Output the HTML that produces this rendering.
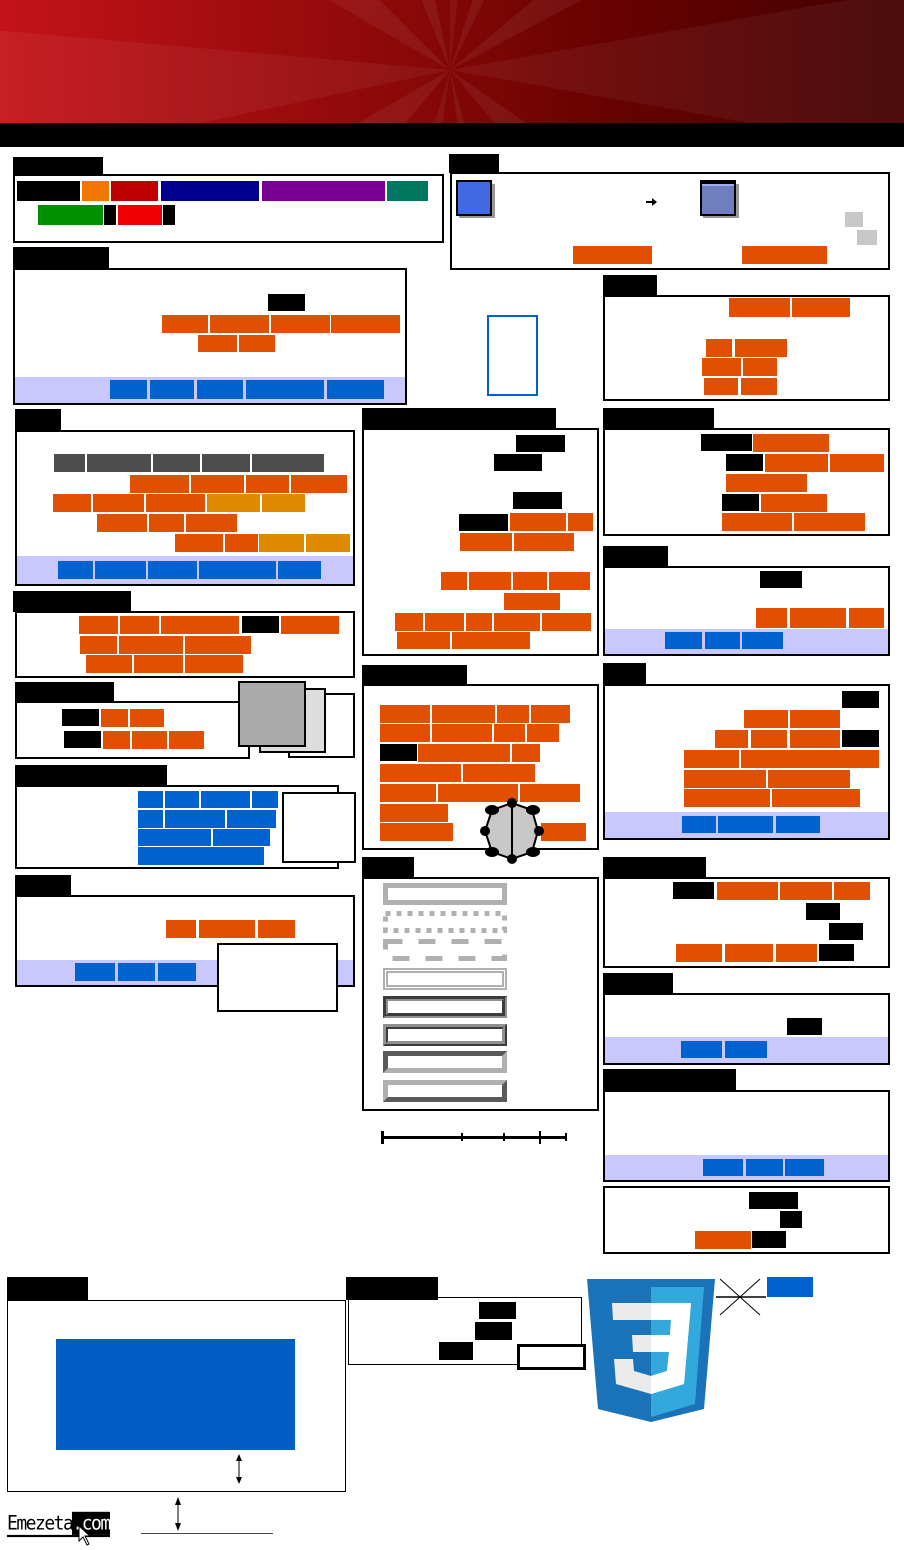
<!DOCTYPE html><html><head><meta charset="utf-8"><style>
*{margin:0;padding:0;box-sizing:border-box}
body{width:904px;height:1550px;position:relative;background:#fff;overflow:hidden;font-family:"Liberation Sans",sans-serif}
i{position:absolute;display:block}
.o{background:#e05000}.b{background:#0062d0}.k{background:#000}.l{background:#c8c8ff}.g{background:#4d4d4d}.y{background:#e08a00}
.bx{border:2px solid #000;background:#fff}
.hd{position:absolute;left:0;top:0;width:904px;height:123px;background:linear-gradient(90deg,#c41318,#8a0808 45%,#6a0202 65%,#420000)}
.rays{position:absolute;left:0;top:0;width:904px;height:123px;background:conic-gradient(from 0deg at 450px 70px,rgba(255,255,255,.05) 0 6deg,transparent 6deg 18deg,rgba(255,255,255,.06) 18deg 26deg,transparent 26deg 50deg,rgba(255,255,255,.06) 50deg 62deg,transparent 62deg 80deg,rgba(255,255,255,.05) 80deg 100deg,transparent 100deg 125deg,rgba(255,255,255,.06) 125deg 140deg,transparent 140deg 165deg,rgba(255,255,255,.06) 165deg 172deg,transparent 172deg 188deg,rgba(255,255,255,.05) 188deg 196deg,transparent 196deg 220deg,rgba(255,255,255,.06) 220deg 240deg,transparent 240deg 258deg,rgba(255,255,255,.05) 258deg 275deg,transparent 275deg 300deg,rgba(255,255,255,.06) 300deg 315deg,transparent 315deg 338deg,rgba(255,255,255,.06) 338deg 348deg,transparent 348deg 360deg)}
.bs{position:absolute;left:383px;width:124px;height:22px}
</style></head><body>
<div class="hd"></div><div class="rays"></div>
<i class="k" style="left:0;top:123px;width:904px;height:24px"></i>

<!-- s1 -->
<i class="k" style="left:13px;top:157px;width:90px;height:18px"></i>
<i class="bx" style="left:13px;top:174px;width:431px;height:69px"></i>
<i class="k" style="left:17px;top:181px;width:63px;height:20px"></i>
<i style="left:82px;top:181px;width:27px;height:20px;background:#f07800"></i>
<i style="left:111px;top:181px;width:47px;height:20px;background:#c00000"></i>
<i style="left:161px;top:181px;width:98px;height:20px;background:#000090"></i>
<i style="left:262px;top:181px;width:123px;height:20px;background:#780090"></i>
<i style="left:387px;top:181px;width:41px;height:20px;background:#007860"></i>
<i style="left:38px;top:205px;width:65px;height:20px;background:#009000"></i>
<i class="k" style="left:104px;top:205px;width:12px;height:20px"></i>
<i style="left:118px;top:205px;width:44px;height:20px;background:#f00000"></i>
<i class="k" style="left:163px;top:205px;width:12px;height:20px"></i>

<!-- s2 -->
<i class="k" style="left:449px;top:154px;width:50px;height:19px"></i>
<i class="bx" style="left:450px;top:172px;width:440px;height:98px"></i>
<i style="left:459px;top:184px;width:36px;height:34px;background:#999"></i>
<i style="left:456px;top:180px;width:36px;height:36px;background:#4169e1;border:2px solid #000"></i>
<i style="left:703px;top:184px;width:36px;height:34px;background:#999"></i>
<i style="left:700px;top:180px;width:36px;height:36px;background:#6f7fbd;border:2px solid #000;border-top:4px solid #000;box-shadow:inset 0 2px 0 #9fb0f0"></i>
<svg style="position:absolute;left:646px;top:198px" width="12" height="9"><polygon points="0,3 6,3 6,0 11,4 6,8 6,5 0,5" fill="#000"/></svg>
<i style="left:845px;top:212px;width:18px;height:15px;background:#c8c8c8"></i>
<i style="left:857px;top:230px;width:20px;height:15px;background:#c8c8c8"></i>
<i class="o" style="left:573px;top:246px;width:79px;height:18px"></i>
<i class="o" style="left:742px;top:246px;width:85px;height:18px"></i>

<!-- s3 -->
<i class="k" style="left:13px;top:247px;width:96px;height:22px"></i>
<i class="bx" style="left:13px;top:268px;width:394px;height:137px"></i>
<i class="k" style="left:268px;top:294px;width:37px;height:17px"></i>
<i class="o" style="left:162px;top:315px;width:46px;height:18px"></i>
<i class="o" style="left:210px;top:315px;width:59px;height:18px"></i>
<i class="o" style="left:271px;top:315px;width:59px;height:18px"></i>
<i class="o" style="left:331px;top:315px;width:69px;height:18px"></i>
<i class="o" style="left:198px;top:335px;width:39px;height:17px"></i>
<i class="o" style="left:239px;top:335px;width:36px;height:17px"></i>
<i class="l" style="left:15px;top:377px;width:390px;height:26px"></i>
<i class="b" style="left:110px;top:380px;width:37px;height:19px"></i>
<i class="b" style="left:150px;top:380px;width:44px;height:19px"></i>
<i class="b" style="left:197px;top:380px;width:46px;height:19px"></i>
<i class="b" style="left:246px;top:380px;width:78px;height:19px"></i>
<i class="b" style="left:327px;top:380px;width:57px;height:19px"></i>
<i style="left:487px;top:315px;width:51px;height:81px;border:2px solid #0062d0"></i>

<!-- s4 -->
<i class="k" style="left:603px;top:275px;width:54px;height:21px"></i>
<i class="bx" style="left:603px;top:295px;width:287px;height:106px"></i>
<i class="o" style="left:729px;top:298px;width:61px;height:19px"></i>
<i class="o" style="left:792px;top:298px;width:58px;height:19px"></i>
<i class="o" style="left:706px;top:339px;width:26px;height:18px"></i>
<i class="o" style="left:735px;top:339px;width:52px;height:18px"></i>
<i class="o" style="left:702px;top:358px;width:39px;height:18px"></i>
<i class="o" style="left:743px;top:358px;width:34px;height:18px"></i>
<i class="o" style="left:704px;top:378px;width:34px;height:17px"></i>
<i class="o" style="left:741px;top:378px;width:36px;height:17px"></i>

<!-- s5 -->
<i class="k" style="left:15px;top:409px;width:46px;height:22px"></i>
<i class="bx" style="left:15px;top:430px;width:340px;height:156px"></i>
<i class="g" style="left:54px;top:454px;width:31px;height:18px"></i>
<i class="g" style="left:87px;top:454px;width:64px;height:18px"></i>
<i class="g" style="left:153px;top:454px;width:47px;height:18px"></i>
<i class="g" style="left:202px;top:454px;width:48px;height:18px"></i>
<i class="g" style="left:252px;top:454px;width:72px;height:18px"></i>
<i class="o" style="left:130px;top:475px;width:59px;height:18px"></i>
<i class="o" style="left:191px;top:475px;width:53px;height:18px"></i>
<i class="o" style="left:246px;top:475px;width:43px;height:18px"></i>
<i class="o" style="left:291px;top:475px;width:56px;height:18px"></i>
<i class="o" style="left:53px;top:494px;width:38px;height:18px"></i>
<i class="o" style="left:93px;top:494px;width:51px;height:18px"></i>
<i class="o" style="left:146px;top:494px;width:59px;height:18px"></i>
<i class="y" style="left:207px;top:494px;width:53px;height:18px"></i>
<i class="y" style="left:262px;top:494px;width:43px;height:18px"></i>
<i class="o" style="left:97px;top:514px;width:50px;height:18px"></i>
<i class="o" style="left:149px;top:514px;width:35px;height:18px"></i>
<i class="o" style="left:186px;top:514px;width:51px;height:18px"></i>
<i class="o" style="left:175px;top:534px;width:48px;height:18px"></i>
<i class="o" style="left:225px;top:534px;width:33px;height:18px"></i>
<i class="y" style="left:259px;top:534px;width:45px;height:18px"></i>
<i class="y" style="left:306px;top:534px;width:44px;height:18px"></i>
<i class="l" style="left:17px;top:556px;width:336px;height:28px"></i>
<i class="b" style="left:58px;top:561px;width:35px;height:18px"></i>
<i class="b" style="left:95px;top:561px;width:51px;height:18px"></i>
<i class="b" style="left:148px;top:561px;width:49px;height:18px"></i>
<i class="b" style="left:199px;top:561px;width:77px;height:18px"></i>
<i class="b" style="left:278px;top:561px;width:43px;height:18px"></i>

<!-- s6 -->
<i class="k" style="left:362px;top:408px;width:194px;height:22px"></i>
<i class="bx" style="left:362px;top:428px;width:237px;height:228px"></i>
<i class="k" style="left:516px;top:435px;width:49px;height:17px"></i>
<i class="k" style="left:494px;top:454px;width:48px;height:17px"></i>
<i class="k" style="left:513px;top:492px;width:49px;height:17px"></i>
<i class="k" style="left:459px;top:514px;width:49px;height:17px"></i>
<i class="o" style="left:510px;top:513px;width:56px;height:18px"></i>
<i class="o" style="left:568px;top:513px;width:25px;height:18px"></i>
<i class="o" style="left:460px;top:533px;width:52px;height:18px"></i>
<i class="o" style="left:514px;top:533px;width:60px;height:18px"></i>
<i class="o" style="left:441px;top:572px;width:26px;height:18px"></i>
<i class="o" style="left:469px;top:572px;width:42px;height:18px"></i>
<i class="o" style="left:513px;top:572px;width:34px;height:18px"></i>
<i class="o" style="left:549px;top:572px;width:41px;height:18px"></i>
<i class="o" style="left:504px;top:593px;width:56px;height:17px"></i>
<i class="o" style="left:395px;top:613px;width:28px;height:18px"></i>
<i class="o" style="left:425px;top:613px;width:39px;height:18px"></i>
<i class="o" style="left:466px;top:613px;width:26px;height:18px"></i>
<i class="o" style="left:494px;top:613px;width:46px;height:18px"></i>
<i class="o" style="left:542px;top:613px;width:49px;height:18px"></i>
<i class="o" style="left:397px;top:632px;width:53px;height:17px"></i>
<i class="o" style="left:452px;top:632px;width:78px;height:17px"></i>

<!-- s7 -->
<i class="k" style="left:603px;top:408px;width:111px;height:21px"></i>
<i class="bx" style="left:603px;top:428px;width:287px;height:108px"></i>
<i class="k" style="left:701px;top:434px;width:51px;height:17px"></i>
<i class="o" style="left:753px;top:434px;width:76px;height:18px"></i>
<i class="k" style="left:726px;top:454px;width:37px;height:17px"></i>
<i class="o" style="left:765px;top:454px;width:63px;height:18px"></i>
<i class="o" style="left:830px;top:454px;width:54px;height:18px"></i>
<i class="o" style="left:726px;top:474px;width:81px;height:18px"></i>
<i class="k" style="left:722px;top:494px;width:37px;height:17px"></i>
<i class="o" style="left:761px;top:494px;width:66px;height:18px"></i>
<i class="o" style="left:722px;top:513px;width:70px;height:18px"></i>
<i class="o" style="left:794px;top:513px;width:71px;height:18px"></i>

<!-- s8 -->
<i class="k" style="left:603px;top:546px;width:65px;height:21px"></i>
<i class="bx" style="left:603px;top:566px;width:287px;height:90px"></i>
<i class="k" style="left:760px;top:571px;width:42px;height:17px"></i>
<i class="o" style="left:756px;top:608px;width:31px;height:20px"></i>
<i class="o" style="left:790px;top:608px;width:56px;height:20px"></i>
<i class="o" style="left:849px;top:608px;width:35px;height:20px"></i>
<i class="l" style="left:605px;top:629px;width:283px;height:25px"></i>
<i class="b" style="left:665px;top:632px;width:37px;height:17px"></i>
<i class="b" style="left:705px;top:632px;width:35px;height:17px"></i>
<i class="b" style="left:742px;top:632px;width:41px;height:17px"></i>

<!-- s9 -->
<i class="k" style="left:13px;top:591px;width:118px;height:21px"></i>
<i class="bx" style="left:15px;top:611px;width:340px;height:67px"></i>
<i class="o" style="left:79px;top:616px;width:39px;height:18px"></i>
<i class="o" style="left:120px;top:616px;width:39px;height:18px"></i>
<i class="o" style="left:161px;top:616px;width:78px;height:18px"></i>
<i class="k" style="left:242px;top:616px;width:37px;height:17px"></i>
<i class="o" style="left:281px;top:616px;width:58px;height:18px"></i>
<i class="o" style="left:80px;top:636px;width:37px;height:18px"></i>
<i class="o" style="left:119px;top:636px;width:64px;height:18px"></i>
<i class="o" style="left:185px;top:636px;width:66px;height:18px"></i>
<i class="o" style="left:86px;top:655px;width:46px;height:18px"></i>
<i class="o" style="left:134px;top:655px;width:49px;height:18px"></i>
<i class="o" style="left:185px;top:655px;width:58px;height:18px"></i>

<!-- s10 -->
<i class="k" style="left:15px;top:682px;width:99px;height:20px"></i>
<i class="bx" style="left:15px;top:701px;width:235px;height:58px"></i>
<i class="k" style="left:62px;top:709px;width:37px;height:17px"></i>
<i class="o" style="left:101px;top:709px;width:27px;height:18px"></i>
<i class="o" style="left:130px;top:709px;width:34px;height:18px"></i>
<i class="k" style="left:64px;top:731px;width:37px;height:17px"></i>
<i class="o" style="left:103px;top:731px;width:27px;height:18px"></i>
<i class="o" style="left:132px;top:731px;width:35px;height:18px"></i>
<i class="o" style="left:169px;top:731px;width:35px;height:18px"></i>
<i class="bx" style="left:288px;top:693px;width:67px;height:65px"></i>
<i style="left:259px;top:688px;width:67px;height:65px;background:#ddd;border:2px solid #000"></i>
<i style="left:238px;top:681px;width:68px;height:66px;background:#aaa;border:2px solid #000"></i>

<!-- s11 -->
<i class="k" style="left:15px;top:765px;width:152px;height:21px"></i>
<i class="bx" style="left:15px;top:785px;width:324px;height:84px"></i>
<i class="b" style="left:138px;top:791px;width:25px;height:17px"></i>
<i class="b" style="left:165px;top:791px;width:34px;height:17px"></i>
<i class="b" style="left:201px;top:791px;width:49px;height:17px"></i>
<i class="b" style="left:252px;top:791px;width:26px;height:17px"></i>
<i class="b" style="left:138px;top:810px;width:25px;height:18px"></i>
<i class="b" style="left:165px;top:810px;width:60px;height:18px"></i>
<i class="b" style="left:227px;top:810px;width:49px;height:18px"></i>
<i class="b" style="left:138px;top:829px;width:73px;height:17px"></i>
<i class="b" style="left:213px;top:829px;width:57px;height:17px"></i>
<i class="b" style="left:138px;top:847px;width:126px;height:18px"></i>
<i class="bx" style="left:282px;top:792px;width:74px;height:71px"></i>

<!-- s12 -->
<i class="k" style="left:15px;top:875px;width:56px;height:21px"></i>
<i class="bx" style="left:15px;top:895px;width:340px;height:92px"></i>
<i class="o" style="left:166px;top:920px;width:30px;height:18px"></i>
<i class="o" style="left:199px;top:920px;width:56px;height:18px"></i>
<i class="o" style="left:258px;top:920px;width:37px;height:18px"></i>
<i class="l" style="left:17px;top:960px;width:336px;height:25px"></i>
<i class="b" style="left:75px;top:963px;width:40px;height:18px"></i>
<i class="b" style="left:118px;top:963px;width:37px;height:18px"></i>
<i class="b" style="left:158px;top:963px;width:38px;height:18px"></i>
<i class="bx" style="left:217px;top:943px;width:121px;height:69px"></i>

<!-- s13 -->
<i class="k" style="left:362px;top:665px;width:105px;height:21px"></i>
<i class="bx" style="left:362px;top:684px;width:237px;height:166px"></i>
<i class="o" style="left:380px;top:705px;width:50px;height:18px"></i>
<i class="o" style="left:432px;top:705px;width:63px;height:18px"></i>
<i class="o" style="left:497px;top:705px;width:32px;height:18px"></i>
<i class="o" style="left:531px;top:705px;width:39px;height:18px"></i>
<i class="o" style="left:380px;top:724px;width:50px;height:18px"></i>
<i class="o" style="left:432px;top:724px;width:60px;height:18px"></i>
<i class="o" style="left:494px;top:724px;width:31px;height:18px"></i>
<i class="o" style="left:527px;top:724px;width:32px;height:18px"></i>
<i class="k" style="left:380px;top:744px;width:37px;height:17px"></i>
<i class="o" style="left:418px;top:744px;width:92px;height:18px"></i>
<i class="o" style="left:512px;top:744px;width:28px;height:18px"></i>
<i class="o" style="left:380px;top:764px;width:81px;height:18px"></i>
<i class="o" style="left:463px;top:764px;width:72px;height:18px"></i>
<i class="o" style="left:380px;top:784px;width:56px;height:18px"></i>
<i class="o" style="left:438px;top:784px;width:80px;height:18px"></i>
<i class="o" style="left:520px;top:784px;width:60px;height:18px"></i>
<i class="o" style="left:380px;top:804px;width:68px;height:18px"></i>
<i class="o" style="left:380px;top:823px;width:73px;height:18px"></i>
<i class="o" style="left:541px;top:823px;width:45px;height:18px"></i>
<svg style="position:absolute;left:478px;top:797px" width="68" height="68" viewBox="0 0 68 68">
<polygon points="34,6 54,13 60,34 54,55 34,62 14,55 7,34 14,13" fill="#c8c8c8" stroke="#000" stroke-width="2"/>
<line x1="34" y1="6" x2="34" y2="62" stroke="#000" stroke-width="2"/>
<g fill="#000"><circle cx="34" cy="6" r="5"/><ellipse cx="55" cy="13" rx="7" ry="5"/><circle cx="61" cy="34" r="5"/><ellipse cx="55" cy="55" rx="7" ry="5"/><circle cx="34" cy="62" r="5"/><ellipse cx="14" cy="55" rx="7" ry="5"/><circle cx="7" cy="34" r="5"/><ellipse cx="14" cy="13" rx="7" ry="5"/></g></svg>

<!-- s14 -->
<i class="k" style="left:603px;top:663px;width:43px;height:22px"></i>
<i class="bx" style="left:603px;top:684px;width:287px;height:156px"></i>
<i class="k" style="left:842px;top:691px;width:37px;height:17px"></i>
<i class="o" style="left:744px;top:710px;width:44px;height:18px"></i>
<i class="o" style="left:790px;top:710px;width:50px;height:18px"></i>
<i class="o" style="left:715px;top:730px;width:33px;height:18px"></i>
<i class="o" style="left:751px;top:730px;width:36px;height:18px"></i>
<i class="o" style="left:790px;top:730px;width:50px;height:18px"></i>
<i class="k" style="left:842px;top:730px;width:37px;height:17px"></i>
<i class="o" style="left:684px;top:750px;width:55px;height:18px"></i>
<i class="o" style="left:741px;top:750px;width:138px;height:18px"></i>
<i class="o" style="left:684px;top:770px;width:82px;height:18px"></i>
<i class="o" style="left:768px;top:770px;width:82px;height:18px"></i>
<i class="o" style="left:684px;top:789px;width:86px;height:18px"></i>
<i class="o" style="left:772px;top:789px;width:88px;height:18px"></i>
<i class="l" style="left:605px;top:812px;width:283px;height:26px"></i>
<i class="b" style="left:682px;top:816px;width:34px;height:17px"></i>
<i class="b" style="left:718px;top:816px;width:55px;height:17px"></i>
<i class="b" style="left:776px;top:816px;width:44px;height:17px"></i>

<!-- s15 -->
<i class="k" style="left:362px;top:857px;width:52px;height:21px"></i>
<i class="bx" style="left:362px;top:877px;width:237px;height:234px"></i>
<i class="bs" style="top:883px;border:5px solid #b0b0b0"></i>
<svg style="position:absolute;left:383px;top:911px" width="124" height="22"><rect x="2.5" y="2.5" width="119" height="17" fill="none" stroke="#b0b0b0" stroke-width="5" stroke-dasharray="5 6"/></svg>
<svg style="position:absolute;left:383px;top:939px" width="124" height="22"><rect x="2.5" y="2.5" width="119" height="17" fill="none" stroke="#b0b0b0" stroke-width="5" stroke-dasharray="17 16"/></svg>
<i class="bs" style="top:968px;border:5px double #b0b0b0"></i>
<i class="bs" style="top:996px;border:5px groove #909090"></i>
<i class="bs" style="top:1024px;border:5px ridge #909090"></i>
<i class="bs" style="top:1051px;border:5px solid;border-color:#5a5a5a #b0b0b0 #b0b0b0 #5a5a5a"></i>
<i class="bs" style="top:1080px;border:5px solid;border-color:#b0b0b0 #5a5a5a #5a5a5a #b0b0b0"></i>
<i class="k" style="left:381px;top:1136px;width:186px;height:3px"></i>
<i class="k" style="left:381px;top:1131px;width:3px;height:13px"></i>
<i class="k" style="left:461px;top:1133px;width:2px;height:8px"></i>
<i class="k" style="left:503px;top:1133px;width:2px;height:8px"></i>
<i class="k" style="left:539px;top:1131px;width:2px;height:13px"></i>
<i class="k" style="left:565px;top:1133px;width:2px;height:8px"></i>

<!-- s16 -->
<i class="k" style="left:603px;top:857px;width:103px;height:21px"></i>
<i class="bx" style="left:603px;top:877px;width:287px;height:91px"></i>
<i class="k" style="left:673px;top:882px;width:41px;height:17px"></i>
<i class="o" style="left:717px;top:882px;width:61px;height:18px"></i>
<i class="o" style="left:780px;top:882px;width:52px;height:18px"></i>
<i class="o" style="left:834px;top:882px;width:36px;height:18px"></i>
<i class="k" style="left:806px;top:903px;width:34px;height:17px"></i>
<i class="k" style="left:829px;top:923px;width:34px;height:17px"></i>
<i class="o" style="left:676px;top:944px;width:46px;height:18px"></i>
<i class="o" style="left:725px;top:944px;width:48px;height:18px"></i>
<i class="o" style="left:776px;top:944px;width:41px;height:18px"></i>
<i class="k" style="left:819px;top:944px;width:35px;height:17px"></i>

<!-- s17 -->
<i class="k" style="left:603px;top:973px;width:70px;height:21px"></i>
<i class="bx" style="left:603px;top:993px;width:287px;height:72px"></i>
<i class="k" style="left:787px;top:1018px;width:35px;height:17px"></i>
<i class="l" style="left:605px;top:1037px;width:283px;height:26px"></i>
<i class="b" style="left:681px;top:1041px;width:41px;height:17px"></i>
<i class="b" style="left:725px;top:1041px;width:42px;height:17px"></i>

<!-- s18 -->
<i class="k" style="left:603px;top:1069px;width:133px;height:22px"></i>
<i class="bx" style="left:603px;top:1090px;width:287px;height:92px"></i>
<i class="l" style="left:605px;top:1155px;width:283px;height:25px"></i>
<i class="b" style="left:703px;top:1159px;width:40px;height:17px"></i>
<i class="b" style="left:746px;top:1159px;width:37px;height:17px"></i>
<i class="b" style="left:785px;top:1159px;width:39px;height:17px"></i>

<!-- s19 -->
<i class="bx" style="left:603px;top:1186px;width:287px;height:68px"></i>
<i class="k" style="left:749px;top:1192px;width:49px;height:17px"></i>
<i class="k" style="left:780px;top:1211px;width:22px;height:17px"></i>
<i class="o" style="left:695px;top:1231px;width:56px;height:18px"></i>
<i class="k" style="left:752px;top:1231px;width:34px;height:17px"></i>

<!-- bottom -->
<i class="k" style="left:7px;top:1277px;width:81px;height:24px"></i>
<i style="left:7px;top:1300px;width:339px;height:192px;border:1.5px solid #000"></i>
<i style="left:56px;top:1339px;width:239px;height:111px;background:#005ec4"></i>
<svg style="position:absolute;left:233px;top:1454px" width="12" height="30"><line x1="6" y1="3" x2="6" y2="27" stroke="#000"/><polygon points="6,0 3,7 9,7" /><polygon points="6,30 3,23 9,23"/></svg>
<i class="k" style="left:346px;top:1277px;width:92px;height:23px"></i>
<i style="left:348px;top:1297px;width:234px;height:68px;border:1px solid #000"></i>
<i class="k" style="left:479px;top:1302px;width:37px;height:17px"></i>
<i class="k" style="left:475px;top:1322px;width:37px;height:18px"></i>
<i class="k" style="left:439px;top:1342px;width:34px;height:18px"></i>
<i class="bx" style="left:517px;top:1344px;width:69px;height:26px;border-width:3px"></i>
<svg style="position:absolute;left:587px;top:1277px" width="128" height="146" viewBox="0 0 128 146">
<defs><clipPath id="rc"><rect x="64" y="0" width="64" height="146"/></clipPath></defs>
<polygon points="0,2 128,2 117,132 64,145 11,132" fill="#1a72b8"/>
<polygon points="64,10 117,10 108,127 64,140" fill="#33a8dc"/>
<polygon points="25,26 104,26 97,107 64,117 29,107 27,82 46,82 47,94 64,99 80,94 82,75 46,75 45,58 83,58 84,43 26,43" fill="#ebebeb"/>
<polygon clip-path="url(#rc)" points="25,26 104,26 97,107 64,117 29,107 27,82 46,82 47,94 64,99 80,94 82,75 46,75 45,58 83,58 84,43 26,43" fill="#fff"/>
</svg>
<svg style="position:absolute;left:716px;top:1277px" width="52" height="42"><line x1="4" y1="2" x2="44" y2="38" stroke="#000"/><line x1="44" y1="2" x2="4" y2="38" stroke="#000"/><line x1="0" y1="20" x2="50" y2="20" stroke="#000" stroke-width="1.5"/></svg>
<i class="b" style="left:767px;top:1277px;width:46px;height:20px"></i>
<div style="position:absolute;left:7px;top:1514px;font-size:18px;line-height:20px;color:#000;font-family:'DejaVu Sans Mono',monospace;letter-spacing:-1.5px;transform:scaleY(1.1);border-bottom:2px solid #000">Emezeta<span style="background:#000;color:#fff">.com</span></div>
<svg style="position:absolute;left:78px;top:1525px" width="14" height="22"><polygon points="1,1 1,16 5,12 9,20 11,19 7,11 12,11" fill="#fff" stroke="#000"/></svg>
<svg style="position:absolute;left:172px;top:1497px" width="12" height="34"><line x1="6" y1="3" x2="6" y2="31" stroke="#000"/><polygon points="6,0 3,8 9,8"/><polygon points="6,34 3,26 9,26"/></svg>
<i style="left:141px;top:1533px;width:132px;height:1px;background:#444"></i>
</body></html>
